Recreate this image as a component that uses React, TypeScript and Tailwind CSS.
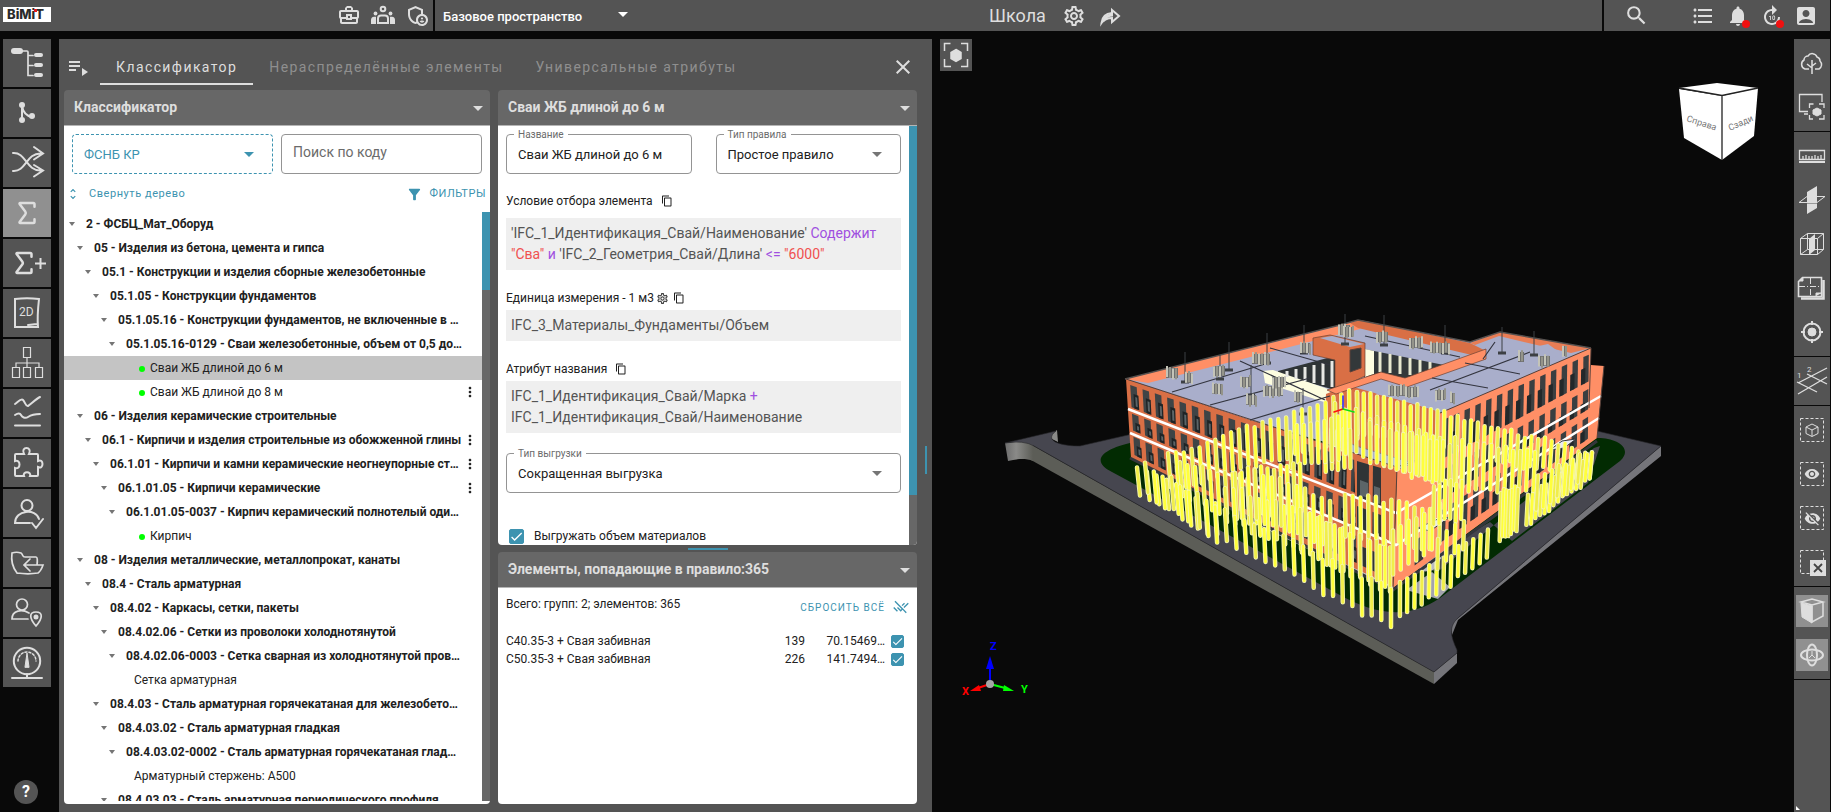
import { useState } from "react"
import type { ReactNode } from "react"
import { Sigma } from "lucide-react"
import {
  MdAccountBox,
  MdArrowDropDown,
  MdCheck,
  MdClose,
  MdContentCopy,
  MdFilterAlt,
  MdFormatListBulleted,
  MdForward10,
  MdMoreVert,
  MdNotifications,
  MdOutlineAdminPanelSettings,
  MdOutlineBusinessCenter,
  MdOutlineSettings,
  MdPlaylistPlay,
  MdRemoveDone,
  MdSearch,
  MdUnfoldMore,
  MdVisibility,
  MdVisibilityOff,
} from "react-icons/md"

type TreeNode = {
  level: number
  text: string
  leaf?: boolean
  dot?: boolean
  menu?: boolean
}

const TREE: TreeNode[] = [
  { level: 0, text: "2 - ФСБЦ_Мат_Оборуд" },
  { level: 1, text: "05 - Изделия из бетона, цемента и гипса" },
  { level: 2, text: "05.1 - Конструкции и изделия сборные железобетонные" },
  { level: 3, text: "05.1.05 - Конструкции фундаментов" },
  { level: 4, text: "05.1.05.16 - Конструкции фундаментов, не включенные в …" },
  { level: 5, text: "05.1.05.16-0129 - Сваи железобетонные, объем от 0,5 до…" },
  { level: 6, text: "Сваи ЖБ длиной до 6 м", leaf: true, dot: true },
  { level: 6, text: "Сваи ЖБ длиной до 8 м", leaf: true, dot: true, menu: true },
  { level: 1, text: "06 - Изделия керамические строительные" },
  { level: 2, text: "06.1 - Кирпичи и изделия строительные из обожженной глины", menu: true },
  { level: 3, text: "06.1.01 - Кирпичи и камни керамические неогнеупорные ст…", menu: true },
  { level: 4, text: "06.1.01.05 - Кирпичи керамические", menu: true },
  { level: 5, text: "06.1.01.05-0037 - Кирпич керамический полнотелый оди…" },
  { level: 6, text: "Кирпич", leaf: true, dot: true },
  { level: 1, text: "08 - Изделия металлические, металлопрокат, канаты" },
  { level: 2, text: "08.4 - Сталь арматурная" },
  { level: 3, text: "08.4.02 - Каркасы, сетки, пакеты" },
  { level: 4, text: "08.4.02.06 - Сетки из проволоки холоднотянутой" },
  { level: 5, text: "08.4.02.06-0003 - Сетка сварная из холоднотянутой пров…" },
  { level: 6, text: "Сетка арматурная", leaf: true },
  { level: 3, text: "08.4.03 - Сталь арматурная горячекатаная для железобето…" },
  { level: 4, text: "08.4.03.02 - Сталь арматурная гладкая" },
  { level: 5, text: "08.4.03.02-0002 - Сталь арматурная горячекатаная глад…" },
  { level: 6, text: "Арматурный стержень: А500", leaf: true },
  { level: 4, text: "08.4.03.03 - Сталь арматурная периодического профиля" },
]

const ELEMENTS = [
  { name: "С40.35-3 + Свая забивная", count: "139", volume: "70.15469…" },
  { name: "С50.35-3 + Свая забивная", count: "226", volume: "141.7494…" },
]

export default function App() {
  return (
    <div className="flex h-screen flex-col overflow-hidden bg-[#090909] pr-px font-[Roboto,'Noto_Sans',sans-serif] text-[#212121]">
      <TopBar />
      <div className="flex min-h-0 flex-1 pt-2">
        <LeftRail />
        <ClassifierPanel />
        <Viewport />
        <RightRail />
      </div>
    </div>
  )
}

function TopBar() {
  return (
    <header className="flex h-[31px] shrink-0 gap-0.5 text-[#dedede]">
      <div className="flex w-[433px] items-center justify-between bg-[#545454] pr-1 pl-[3px]">
        <a href="#" aria-label="BiMiT" className="mt-[-2px] flex h-[15px] w-12 items-center justify-center bg-white">
          <Logo />
        </a>
        <div className="flex gap-2.5 pb-0.5">
          <button type="button" aria-label="Проекты"><MdOutlineBusinessCenter size={24} /></button>
          <button type="button" aria-label="Группы"><GroupsIcon /></button>
          <button type="button" aria-label="Права"><MdOutlineAdminPanelSettings size={24} /></button>
        </div>
      </div>
      <div className="flex min-w-0 flex-1 items-center bg-[#545454]">
        <div className="relative w-52 shrink-0 pl-2">
          <select
            aria-label="Пространство"
            className="w-full appearance-none bg-transparent text-[13px] font-medium text-white outline-none"
          >
            <option>Базовое пространство</option>
          </select>
          <MdArrowDropDown size={24} className="pointer-events-none absolute top-[-2px] right-2 text-white" />
        </div>
        <div className="flex flex-1 items-center justify-center pr-[134px]">
          <h1 className="mr-4 text-[18px]">Школа</h1>
          <button type="button" aria-label="Настройки" className="mr-3"><MdOutlineSettings size={24} /></button>
          <button type="button" aria-label="Поделиться"><ShareIcon /></button>
        </div>
      </div>
      <div className="flex w-[226px] items-center justify-between bg-[#545454] pr-3 pl-5">
        <button type="button" aria-label="Поиск" className="mr-8"><MdSearch size={25} /></button>
        <button type="button" aria-label="Список"><MdFormatListBulleted size={24} /></button>
        <button type="button" aria-label="Уведомления" className="relative">
          <MdNotifications size={24} />
          <span className="absolute right-0 bottom-0 size-2 rounded-full bg-[#f01010]" />
        </button>
        <button type="button" aria-label="История" className="relative">
          <MdForward10 size={24} />
          <span className="absolute right-0 bottom-0 size-2 rounded-full bg-[#f01010]" />
        </button>
        <button type="button" aria-label="Профиль"><MdAccountBox size={24} /></button>
      </div>
    </header>
  )
}

function Logo() {
  return (
    <svg width="48" height="15" viewBox="0 0 48 15">
      <text x="4" y="12" fontFamily="Inter, sans-serif" fontWeight="800" fontSize="13" fill="#2b2b2b">BiMiT</text>
      <rect x="31" y="2" width="3" height="3" fill="#e01b1b" />
    </svg>
  )
}

function GroupsIcon() {
  return (
    <svg width="24" height="24" viewBox="0 0 24 24" fill="none" stroke="currentColor" strokeWidth="2">
      <circle cx="12" cy="6" r="2.3" />
      <path d="M7 20v-4.5a3 3 0 0 1 3-3h4a3 3 0 0 1 3 3V20z" />
      <g fill="currentColor" stroke="none">
        <circle cx="4.5" cy="10.5" r="1.9" />
        <circle cx="19.5" cy="10.5" r="1.9" />
        <path d="M0 21v-4c0-2 1-3.300 3-3.300h2V21zM24 21v-4c0-2-1-3.300-3-3.300h-2V21z" />
      </g>
    </svg>
  )
}

function ShareIcon() {
  return (
    <svg width="24" height="24" viewBox="0 0 24 24" fill="none" stroke="currentColor" strokeWidth="2">
      <path d="M14 6l7 6-7 6v-4c-5 0-8 1.500-10.500 5 .5-5 3.500-9.500 10.500-10z" />
      <path d="M5 17c2-4 5-6 10-6" strokeWidth="3" />
    </svg>
  )
}

/* ---------- left rail ---------- */

const RAIL_ICONS: { label: string; icon: ReactNode }[] = [
  {
    label: "Структура",
    icon: (
      <>
        <rect x="8" y="9" width="12" height="6" rx="3" fill="currentColor" stroke="none" />
        <path d="M19 12h5a1 1 0 0 1 1 1v23.500h5M25 16.500h5M25 26.500h5" strokeWidth="1.700" />
        <g fill="currentColor" stroke="none">
          <rect x="31" y="14" width="9" height="4" rx="2" />
          <rect x="31" y="24" width="9" height="4" rx="2" />
          <rect x="31" y="34" width="9" height="4" rx="2" />
        </g>
      </>
    ),
  },
  {
    label: "Ветви",
    icon: (
      <>
        <path d="M19 15v17M19 17c1 6 5 10 10 11" />
        <g fill="currentColor" stroke="none">
          <circle cx="19" cy="16" r="3" />
          <circle cx="19" cy="31" r="3" />
          <circle cx="29" cy="27" r="3" />
        </g>
      </>
    ),
  },
  {
    label: "Сопоставление",
    icon: (
      <path d="M10 14c13-1 13 18 28 17.500M10 32c13 1 13-18 28-17.500M31 8l9 6.500-9 6M31 26l9 5.500-9 6" />
    ),
  },
  { label: "Классификатор", icon: null },
  { label: "Добавить сумму", icon: null },
  {
    label: "2D",
    icon: (
      <>
        <path d="M12 10c8-1 16-1 24 0-1 9-2 18-1 28H12zM25 36c3 0 8-1 9-1" />
        <text x="16" y="27" fontSize="12" fill="currentColor" stroke="none">2D</text>
      </>
    ),
  },
  {
    label: "Иерархия",
    icon: (
      <path
        d="M20.500 8.500h7v10h-7zM9.500 28.500h7v10h-7zM20.500 28.500h7v10h-7zM32.500 28.500h7v10h-7zM24 19v9M13 28v-4h23v4"
        strokeWidth="1.200"
      />
    ),
  },
  {
    label: "Графики",
    icon: <path d="M12 15c3-2 6-6 8-4s3 7 5 6 8-7 12-9M12 26c3-2 5-2 6 0s4 4 7 2 8-3 12-3M12 36.500h25" />,
  },
  {
    label: "Плагины",
    icon: (
      <path d="M13 15h8c-4-8 9-8 5 0h8q1 0 1 1v6c6-3 6 9 0 6v8q0 1-1 1h-7c2-5-8-5-6 0h-8q-1 0-1-1v-7c6 2 6-9 0-7v-6q0-1 1-1z" />
    ),
  },
  {
    label: "Согласование",
    icon: <path d="M24 11a5.500 5.500 0 1 1 0 11 5.500 5.500 0 0 1 0-11zM27 34H12c0-13 21-15 24-4M29 34l4 5 7-9" />,
  },
  {
    label: "Файлы",
    icon: (
      <path
        d="M14 34C10 29 8 21 9 14c3-1 6-1 9 0 2 1 1 4 4 4h11q2 0 1 8M14 34c7 1 15 1 21 0 3-2 4-5 5-8H21M27 20l-6 6 6 6"
        strokeWidth="1.700"
      />
    ),
  },
  {
    label: "Местоположение",
    icon: (
      <>
        <path d="M19 10a5.500 5.500 0 1 1 0 11 5.500 5.500 0 0 1 0-11zM25 30H9c0-9 10-10 17-6M33 23c-7 0-7 6 0 14 7-8 7-14 0-14z" strokeWidth="1.700" />
        <circle cx="33" cy="28" r="1.500" fill="currentColor" />
      </>
    ),
  },
  {
    label: "Показатели",
    icon: (
      <>
        <circle cx="24" cy="22" r="13.200" />
        <path d="M9 39h30M24 35v4" />
        <path d="M15 22a9 9 0 0 1 18 0" strokeWidth="1.500" strokeDasharray="2 2" />
        <path d="M22 28l2-14 2 14z" fill="currentColor" strokeWidth="1" />
      </>
    ),
  },
]

function LeftRail() {
  return (
    <nav className="flex w-[59px] shrink-0 flex-col justify-between pl-[3px] text-[#dedede]">
      <div className="flex flex-col gap-0.5">
        {RAIL_ICONS.map((item, i) => (
          <button
            key={item.label}
            type="button"
            aria-label={item.label}
            className={`flex size-12 items-center justify-center ${i === 3 ? "bg-[#909090]" : "bg-[#545454]"}`}
          >
            {i === 3 && <Sigma size={30} strokeWidth={2} />}
            {i === 4 && (
              <>
                <Sigma size={30} strokeWidth={2} />
                <svg width="11" height="11" viewBox="0 0 11 11" stroke="currentColor" strokeWidth="2" className="-ml-1">
                  <path d="M5.500 0v11M0 5.500h11" />
                </svg>
              </>
            )}
            {item.icon && (
              <svg width="48" height="48" viewBox="0 0 48 48" fill="none" stroke="currentColor" strokeWidth="2" strokeLinecap="round">
                {item.icon}
              </svg>
            )}
          </button>
        ))}
      </div>
      <button type="button" className="mb-2 ml-[11px] size-6 rounded-full bg-[#545454] text-[16px] leading-6 font-bold text-white">
        ?
      </button>
    </nav>
  )
}

/* ---------- classifier ---------- */

function ClassifierPanel() {
  const [tab, setTab] = useState(0)
  const tabs = ["Классификатор", "Нераспределённые элементы", "Универсальные атрибуты"]

  return (
    <main className="relative flex w-[873px] shrink-0 flex-col bg-[#545454] pr-[15px] pb-2 pl-[5px]">
      <div className="flex h-[51px] shrink-0 items-center text-[#dedede]">
        <button type="button" aria-label="Меню" className="mt-1 ml-0.5 w-[34px]"><MdPlaylistPlay size={24} /></button>
        <div role="tablist" className="flex flex-1 self-stretch pt-3 pb-[5px]">
          {tabs.map((title, i) => (
            <button
              key={title}
              type="button"
              role="tab"
              aria-selected={tab === i}
              onClick={() => setTab(i)}
              className={`border-b-2 px-4 text-[14px] tracking-widest ${
                tab === i ? "border-[#dedede] text-[#dedede]" : "border-transparent text-[#8f8f8f]"
              }`}
            >
              {title}
            </button>
          ))}
        </div>
        <button type="button" aria-label="Закрыть" className="mt-1 mr-0.5"><MdClose size={24} /></button>
      </div>
      <div className="flex min-h-0 flex-1 gap-2">
        <Card title="Классификатор" className="min-w-0 flex-1">
          <Classifier />
        </Card>
        <div className="flex w-[419px] shrink-0 flex-col">
          <Card title="Сваи ЖБ длиной до 6 м" className="min-h-0 flex-1">
            <RuleForm />
          </Card>
          <div className="flex h-[7px] shrink-0 items-center justify-center">
            <span className="h-0.5 w-10 bg-[#3d93b0]" />
          </div>
          <Card title="Элементы, попадающие в правило:365" className="h-[252px] shrink-0">
            <ElementList />
          </Card>
        </div>
      </div>
      <span className="absolute top-[407px] right-[5px] h-7 w-0.5 bg-[#3d93b0]" />
    </main>
  )
}

function Card({ title, className, children }: { title: string; className: string; children: ReactNode }) {
  return (
    <section className={`flex flex-col overflow-hidden rounded ${className}`}>
      <div className="flex h-9 shrink-0 items-center justify-between border-b border-[#b5b5b5] bg-[#676767] pl-2.5 text-[#dedede]">
        <h2 className="text-[14px] font-bold">{title}</h2>
        <button type="button" aria-label="Свернуть"><MdArrowDropDown size={24} /></button>
      </div>
      <div className="flex min-h-0 flex-1 flex-col bg-white">{children}</div>
    </section>
  )
}

function Classifier() {
  const [selected, setSelected] = useState(6)

  return (
    <>
      <div className="grid grid-cols-2 gap-2 p-2">
        <div className="relative">
          <select
            aria-label="Классификатор"
            className="h-10 w-full appearance-none rounded border border-dashed border-[#3d93b0] bg-white px-[11px] pt-0.5 text-[13px] text-[#3d93b0] outline-none"
          >
            <option>ФСНБ КР</option>
          </select>
          <MdArrowDropDown size={24} className="pointer-events-none absolute top-2 right-3 text-[#3d93b0]" />
        </div>
        <input
          type="text"
          aria-label="Поиск по коду"
          placeholder="Поиск по коду"
          className="h-10 w-full rounded border border-[#949494] px-[11px] pb-1 text-[14px] outline-none placeholder:text-[#6b6b6b]"
        />
      </div>
      <div className="flex h-[30px] shrink-0 items-center justify-between pr-1 pb-1.5 pl-0.5 text-[11px] tracking-wider text-[#3d93b0]">
        <button type="button" className="flex items-center gap-[9px]">
          <MdUnfoldMore size={14} />
          Свернуть дерево
        </button>
        <button type="button" className="flex items-center gap-1.5">
          <MdFilterAlt size={17} />
          ФИЛЬТРЫ
        </button>
      </div>
      <div className="mb-[3px] flex min-h-0 flex-1">
        <ul className="min-w-0 flex-1 overflow-hidden">
          {TREE.map((node, i) => (
            <li
              key={i}
              onClick={() => setSelected(i)}
              style={{ paddingLeft: 5 + node.level * 8 }}
              className={`flex h-6 items-center pr-1 text-[12px] whitespace-nowrap ${selected === i ? "bg-[#c4c4c4]" : ""}`}
            >
              {!node.leaf && (
                <button type="button" aria-label="Развернуть" className="mr-[11px] text-[#757575]">
                  <svg width="6" height="4" viewBox="0 0 6 4"><path d="M0 0h6L3 4z" fill="currentColor" /></svg>
                </button>
              )}
              {node.dot && <span className="mt-0.5 mr-[5px] ml-[22px] size-1.5 shrink-0 rounded-full bg-[#00ff00]" />}
              <span className={`flex-1 ${node.leaf ? "" : "font-bold"} ${node.leaf && !node.dot ? "ml-[17px]" : ""}`}>
                {node.text}
              </span>
              {node.menu && (
                <button type="button" aria-label="Действия"><MdMoreVert size={16} /></button>
              )}
            </li>
          ))}
        </ul>
        <div className="w-2 bg-[#676767]">
          <div className="h-[78px] bg-[#3d93b0]" />
        </div>
      </div>
    </>
  )
}

function Caption({ children, gear }: { children: ReactNode; gear?: boolean }) {
  return (
    <div className="flex h-5 items-center text-[12px]">
      <span>{children}</span>
      {gear && <MdOutlineSettings size={13} className="ml-0.5 text-[#424242]" />}
      <button type="button" aria-label="Копировать" className={gear ? "ml-1" : "ml-2"}>
        <MdContentCopy size={12} />
      </button>
    </div>
  )
}

function SelectField({ id, label, value }: { id: string; label: string; value: string }) {
  return (
    <div className="relative min-w-0 flex-1">
      <label htmlFor={id} className="absolute top-[-7px] left-2 bg-white px-1 text-[10px] leading-4 text-[#6b6b6b]">
        {label}
      </label>
      <select
        id={id}
        className="h-10 w-full appearance-none rounded border border-[#949494] bg-white px-[11px] pt-0.5 text-[13px] outline-none"
      >
        <option>{value}</option>
      </select>
      <MdArrowDropDown size={24} className="pointer-events-none absolute top-2 right-3 text-[#757575]" />
    </div>
  )
}

function RuleForm() {
  return (
    <div className="flex min-h-0 flex-1">
      <div className="min-w-0 flex-1 overflow-hidden pt-2 pr-2 pl-2">
        <div className="flex gap-6">
          <div className="relative min-w-0 flex-1">
            <label htmlFor="name" className="absolute top-[-7px] left-2 bg-white px-1 text-[10px] leading-4 text-[#6b6b6b]">
              Название
            </label>
            <input
              id="name"
              type="text"
              defaultValue="Сваи ЖБ длиной до 6 м"
              className="h-10 w-full rounded border border-[#949494] px-[11px] text-[13px] outline-none"
            />
          </div>
          <SelectField id="rule" label="Тип правила" value="Простое правило" />
        </div>
        <div className="mt-[17px]"><Caption>Условие отбора элемента</Caption></div>
        <p className="mt-[7px] bg-[#efefef] p-[5px] text-[14px] leading-[21px] text-[#545454]">
          'IFC_1_Идентификация_Свай/Наименование' <span className="text-[#a04fe0]">Содержит</span>{" "}
          <span className="text-[#f05050]">"Сва"</span> <span className="text-[#a04fe0]">и</span>{" "}
          'IFC_2_Геометрия_Свай/Длина' <span className="text-[#a04fe0]">&lt;=</span>{" "}
          <span className="text-[#f05050]">"6000"</span>
        </p>
        <div className="mt-[18px]"><Caption gear>Единица измерения - 1 м3</Caption></div>
        <p className="mt-0.5 bg-[#efefef] p-[5px] text-[14px] leading-[21px] text-[#545454]">
          IFC_3_Материалы_Фундаменты/Объем
        </p>
        <div className="mt-[18px]"><Caption>Атрибут названия</Caption></div>
        <p className="mt-0.5 bg-[#efefef] p-[5px] text-[14px] leading-[21px] text-[#545454]">
          IFC_1_Идентификация_Свай/Марка <span className="text-[#a04fe0]">+</span>
          <br />
          IFC_1_Идентификация_Свай/Наименование
        </p>
        <div className="mt-5 flex"><SelectField id="export" label="Тип выгрузки" value="Сокращенная выгрузка" /></div>
        <div className="mt-[34px] flex items-center pl-[3px] text-[12px]">
          <Checkbox id="volume" large />
          <label htmlFor="volume" className="pl-2.5">Выгружать объем материалов</label>
        </div>
      </div>
      <div className="w-2 bg-[#676767]">
        <div className="h-[88%] bg-[#3d93b0]" />
      </div>
    </div>
  )
}

function Checkbox({ id, large }: { id: string; large?: boolean }) {
  const box = large ? "size-[15px]" : "size-[13px]"
  return (
    <span className={`relative inline-block shrink-0 ${box}`}>
      <input
        id={id}
        type="checkbox"
        defaultChecked
        className={`peer block appearance-none rounded-[2px] border border-[#3d93b0] checked:bg-[#3d93b0] ${box}`}
      />
      <MdCheck className="pointer-events-none absolute inset-0 hidden size-full text-white peer-checked:block" />
    </span>
  )
}

function ElementList() {
  return (
    <div className="px-2 pt-1.5">
      <div className="flex h-5 items-center justify-between text-[12px]">
        <span>Всего: групп: 2; элементов: 365</span>
        <button type="button" className="mt-1.5 flex items-center gap-2 text-[10px] tracking-widest text-[#3d93b0]">
          СБРОСИТЬ ВСЁ
          <MdRemoveDone size={16} />
        </button>
      </div>
      <table className="mt-[18px] w-full table-fixed text-[12px] leading-[18px]">
        <tbody>
          {ELEMENTS.map((row, i) => (
            <tr key={row.name}>
              <td className="p-0"><label htmlFor={`el${i}`}>{row.name}</label></td>
              <td className="w-10 p-0 text-right">{row.count}</td>
              <td className="w-20 p-0 text-right">{row.volume}</td>
              <td className="w-6 p-0 pl-1.5"><span className="flex"><Checkbox id={`el${i}`} /></span></td>
            </tr>
          ))}
        </tbody>
      </table>
    </div>
  )
}

/* ---------- 3D view ---------- */

function FocusIcon() {
  return (
    <svg width="32" height="32" viewBox="0 0 32 32" fill="none" stroke="#dedede" strokeWidth="1.500">
      <path d="M4.500 12V4.500h6M21 4.500h6.500V12M27.500 20v7.500H21M11 27.500H4.500V20" />
      <path d="M16 10.500l5 3v6l-5 3-5-3v-6z" fill="#dedede" />
    </svg>
  )
}

function Viewport() {
  return (
    <div className="relative -mt-2 min-w-0 flex-1">
      <svg viewBox="932 31 862 781" className="size-full" fontFamily="Roboto, sans-serif">
        <Site />
        <Building />
        <Piles />
        <Axes />
        <ViewCube />
      </svg>
      <button type="button" aria-label="Показать всё" className="absolute top-2 left-2 size-8 bg-[#545454]">
        <FocusIcon />
      </button>
    </div>
  )
}

type Pt = [number, number]
type Quad = [Pt, Pt, Pt, Pt]

// point inside a quad given as TL, TR, BR, BL
function at(q: Quad, u: number, v: number): Pt {
  const mix = (a: Pt, b: Pt, t: number): Pt => [a[0] + (b[0] - a[0]) * t, a[1] + (b[1] - a[1]) * t]
  return mix(mix(q[0], q[1], u), mix(q[3], q[2], u), v)
}

function cell(q: Quad, u0: number, u1: number, v0: number, v1: number) {
  return [at(q, u0, v0), at(q, u1, v0), at(q, u1, v1), at(q, u0, v1)]
    .map((p) => p.map((n) => n.toFixed(1)).join(","))
    .join(" ")
}

function noise(n: number) {
  const s = Math.sin(n * 127.1) * 43758.5453
  return s - Math.floor(s)
}

function Site() {
  return (
    <g>
      <defs>
        <linearGradient id="tip" x1="0" x2="1">
          <stop offset="0" stopColor="#6c6c6c" />
          <stop offset="0.4" stopColor="#8a8a88" />
          <stop offset="1" stopColor="#5c5d57" />
        </linearGradient>
      </defs>
      <path d="M1030 444L1434 672V684L1031 460z" fill="#5c5d57" />
      <path d="M1005 443l20-2 8 3v17c-8-3-16-2-25 0z" fill="url(#tip)" />
      <path d="M1048 437l9-7 1 12z" fill="#8a8a88" />
      <path d="M1434 672l23-19v10l-23 21z" fill="#75757a" />
      <path d="M1661 446v10L1458 620l-6 15c-2-8 0-13 6-17z" fill="#75757a" />
      <path
        d="M1005 443L1056 431C1044 440 1058 446 1080 446L1128 435 1350 380 1597 431 1661 446 1458 618C1448 627 1451 637 1457 650V653L1434 672 1034 446q-10-6-29-3z"
        fill="#46464f"
        stroke="#26262a"
        strokeWidth=".6"
      />
      <path
        d="M1134 442C1098 450 1092 462 1112 472L1338 594C1370 612 1405 622 1440 598L1620 461C1634 448 1616 438 1598 438L1350 430z"
        fill="#022b02"
      />
      <path d="M1440 570L1500 520 1594 448 1600 446 1588 483 1512 541 1490 522 1430 556z" fill="#46464f" />
      <path d="M1406 590l26-18 18 15-12 12z" fill="#a3a3ad" />
      <path d="M1418 566l22-20 8 2-14 22-12 2z" fill="#b9bac2" stroke="#55575e" strokeDasharray="2 1" />
    </g>
  )
}

function Building() {
  const left: Quad = [[1126, 379], [1397, 467], [1393, 588], [1131, 458]]
  const front: Quad = [[1397, 470], [1436, 455], [1436, 554], [1393, 588]]
  const right: Quad = [[1440, 413], [1591, 348], [1590, 443], [1436, 554]]
  const floors = [[0.06, 0.34], [0.42, 0.63], [0.71, 0.94]]

  return (
    <g>
      {/* roofs */}
      <path d="M1125 379L1340 325 1358 320 1470 342 1500 332 1591 348V365L1440 420 1420 470 1250 420z" fill="#a9aecb" />
      <path d="M1125 379L1338 326 1360 320v9L1148 383z" fill="#ff8f66" />
      <path d="M1350 323l10-3 110 23 16 8-10 5-118-28z" fill="#d96f45" />
      <path d="M1470 343l30-11 91 16-20 5-72-17-24 9z" fill="#e87d55" />
      <path d="M1125 379L1340 325 1358 320 1470 342 1500 332 1591 348" fill="none" stroke="#55504e" strokeWidth="1.500" />

      {/* inner court */}
      <path d="M1278 371l57-15v34l-57-16z" fill="#2f3436" />
      <path d="M1263 371l10-1 58 20-4 13-62-20z" fill="#fdfde0" />
      {[0, 1, 2, 3, 4, 5].map((i) => (
        <path key={i} d={`M${1287 + i * 9} ${371 - i * 2}v${6 + i * 4}`} stroke="#e8e8e4" strokeWidth="3" />
      ))}
      <path d="M1364 349l80 16-4 16-40 0-20-6-16 2z" fill="#33383a" />
      <path d="M1365 349l9 2v23l-9 3z" fill="#fdfde0" />
      {[0, 1, 2, 3, 4, 5].map((i) => (
        <path key={i} d={`M${1380 + i * 10} ${352 + i * 2}v${20 - i}`} stroke="#e8e8d0" strokeWidth="3" />
      ))}
      <path d="M1313 338l17-3 35 8v33l-30 14v-30l-22-5z" fill="#d96f45" stroke="#6b4030" strokeWidth=".7" />
      <path d="M1320 338l12-2 32 8-14 3z" fill="#a9aecb" />
      <path d="M1350 350l11-2v20l-11 4z" fill="#33383a" stroke="#5e4038" />

      {/* right wing wall above the low block */}
      <path d="M1326 394l24-10 90 28-1 50-40 6-75-22z" fill="#d96f45" />
      <path d="M1338 391l45-15 20 4-4 12 46-14-7 33-88-25z" fill="#a9aecb" />
      <path d="M1438 408l82-36 42-18-14-10-65 14-82 28-26 8z" fill="#a9aecb" />
      <path d="M1327 390l54-18 24 6 81-29v10l-79 28-26-8-45 15z" fill="#ff8f66" stroke="#6b4030" strokeWidth=".7" />
      <path d="M1340 438l16 8 57 17-16 7-60-17z" fill="#a9aecb" stroke="#6b6f80" strokeWidth=".8" />

      {/* facades */}
      <path d="M1126 379L1250 420 1335 447 1397 467 1393 588 1131 458z" fill="#d96f45" />
      <path d="M1397 470l39-15 4-42 151-65v17l13 1-7 72-204 150z" fill="#ff8f66" />

      {Array.from({ length: 22 }, (_, i) =>
        floors.map(([a, b], j) => (
          <g key={`${i}-${j}`}>
            <polygon points={cell(left, (i + 0.32) / 22, (i + 0.85) / 22, a, b)} fill="#3f4446" />
            <polygon points={cell(left, (i + 0.55) / 22, (i + 0.95) / 22, a + 0.1, b)} fill="#1f2426" />
            <polygon points={cell(left, (i + 0.68) / 22, (i + 0.84) / 22, a + 0.13, b - 0.03)} fill="#5c6568" />
          </g>
        )),
      )}
      {Array.from({ length: 14 }, (_, i) =>
        floors.map(([a, b], j) => (
          <g key={`${i}-${j}`}>
            <polygon points={cell(right, (i + 0.3) / 14, (i + 0.8) / 14, a, b)} fill="#3a3f41" />
            <polygon points={cell(right, (i + 0.1) / 14, (i + 0.5) / 14, a + 0.12, b)} fill="#23282a" />
          </g>
        )),
      )}
      <polygon points={cell(front, 0.5, 0.7, 0.72, 0.95)} fill="#33383a" />
      {/* solid corner of the entrance block */}
      <path d="M1354 453l43 15-4 118-36-17z" fill="#d96f45" />
      <path d="M1357 461l24 7v38l-24-8zM1357 506l24 9v22l-24-9zM1358 545l22 9v20l-22-10z" fill="#2f3436" />
      <path d="M1360 480l8 3v15l-8-3zM1374 486l6 2v16l-6-2z" fill="#5c6568" />
      <path d="M1371 462l-1 110" stroke="#d96f45" strokeWidth="4" />

      {/* floor bands */}
      <g fill="none" stroke="#fff" strokeWidth="2.500">
        <path d="M1128 409L1396 513 1601 396" />
        <path d="M1130 433L1396 545 1599 418" />
        <path d="M1250 520L1393 588" stroke="#c9c9d0" />
      </g>
      <path d="M1130 458L1393 590 1597 441" fill="none" stroke="#33363c" strokeWidth="3" />
      <path d="M1126 379L1397 467 1440 452M1440 413L1591 348M1604 366L1597 438M1397 467L1393 588M1591 348l-2 60" fill="none" stroke="#55403a" />
      <path d="M1418 528l20-9 12-2-20 14zM1550 450l12-9 14-2-12 9z" fill="#e9e9f2" stroke="#34383e" />

      {/* roof seams */}
      <path
        d="M1172 392L1265 364M1210 405L1310 378M1250 420L1330 396M1240 361L1325 400M1270 348L1330 365M1430 390L1530 352M1432 378L1488 388M1465 363L1520 374M1483 359L1495 342M1365 336L1460 357"
        fill="none"
        stroke="#33353f"
        strokeWidth="1.200"
      />
      <RoofEquipment />
    </g>
  )
}

const UNITS: [number, number, number][] = [
  [1166, 368, 12], [1185, 373, 8], [1213, 366, 12], [1212, 384, 10], [1252, 354, 16], [1258, 354, 12],
  [1246, 395, 10], [1263, 386, 20], [1294, 392, 8], [1300, 343, 10], [1338, 325, 12], [1376, 332, 12],
  [1343, 327, 10], [1409, 338, 14], [1430, 343, 20], [1240, 377, 10], [1272, 377, 14], [1388, 386, 18],
  [1405, 387, 14], [1435, 390, 10], [1450, 393, 5], [1538, 356, 12], [1518, 352, 6], [1562, 346, 4],
]

const MASTS: [number, number, number][] = [
  [1185, 352, 30], [1229, 342, 28], [1267, 333, 30], [1304, 325, 28], [1345, 314, 30], [1384, 315, 30],
  [1445, 325, 28], [1502, 327, 26], [1534, 331, 24], [1303, 388, 26], [1220, 355, 24], [1251, 365, 30],
]

function RoofEquipment() {
  return (
    <g>
      {MASTS.map(([x, y, h]) => (
        <g key={`${x}-${y}`} stroke="#3d4044">
          <path d={`M${x} ${y}v${h}`} />
          <path d={`M${x - 4} ${y + h}h8`} strokeWidth="3" />
        </g>
      ))}
      {UNITS.map(([x, y, w], i) => (
        <g key={i}>
          <rect x={x} y={y} width={w} height={10} fill="#6f7070" />
          {Array.from({ length: Math.ceil(w / 3) }, (_, k) => (
            <path
              key={k}
              d={`M${x + k * 3 + 1} ${y - 2 + noise(i * 9 + k) * 3}v11`}
              stroke={k % 2 ? "#94948a" : "#c4c4b8"}
              strokeWidth="2"
            />
          ))}
        </g>
      ))}
    </g>
  )
}

// start point, end point, pile length at both ends, count
const PILE_ROWS: [number, number, number, number, number, number, number][] = [
  [1168, 456, 1357, 390, 34, 46, 25],
  [1357, 390, 1592, 453, 42, 26, 36],
  [1335, 405, 1440, 440, 42, 46, 16],
  [1350, 430, 1325, 432, 38, 40, 5],
  [1290, 430, 1345, 412, 36, 44, 9],
  [1370, 425, 1470, 448, 36, 40, 16],
  [1455, 440, 1535, 452, 48, 40, 12],
  [1180, 462, 1255, 480, 34, 46, 11],
  [1235, 472, 1300, 464, 46, 48, 11],
  [1225, 486, 1385, 540, 34, 46, 20],
  [1255, 470, 1330, 500, 48, 46, 10],
  [1345, 492, 1430, 510, 42, 40, 12],
  [1300, 510, 1390, 550, 40, 44, 10],
  [1393, 530, 1440, 505, 44, 40, 7],
  [1434, 485, 1462, 482, 38, 38, 6],
  [1137, 468, 1391, 590, 28, 38, 27],
  [1145, 464, 1215, 505, 30, 36, 9],
  [1400, 585, 1488, 531, 34, 28, 13],
  [1438, 540, 1464, 520, 30, 28, 4],
  [1501, 492, 1518, 488, 48, 42, 7],
  [1528, 495, 1592, 453, 30, 26, 15],
  [1538, 478, 1580, 456, 34, 28, 7],
]

function Piles() {
  return (
    <g strokeLinecap="round">
      {PILE_ROWS.map(([x1, y1, x2, y2, h1, h2, n], r) =>
        Array.from({ length: n }, (_, i) => {
          const t = i / (n - 1)
          const x = x1 + (x2 - x1) * t
          const y = y1 + (y2 - y1) * t + (noise(r * 41 + i) - 0.5) * 6
          const h = h1 + (h2 - h1) * t
          // piles lean towards the vanishing point
          const lean = (1391 - x) * 0.012
          const d = `M${x.toFixed(1)} ${y.toFixed(1)}l${lean.toFixed(1)} ${h.toFixed(1)}`
          return (
            <g key={`${r}-${i}`}>
              <path d={d} stroke="#f5f5b4" strokeWidth="4.500" />
              <path d={d} stroke={i % 3 ? "#ffff3c" : "#f0ee4a"} strokeWidth="2.800" />
            </g>
          )
        }),
      )}
      <path d="M1343 409v-13" stroke="#2020ff" strokeWidth="1.500" />
      <path d="M1343 409l-9 3" stroke="#ff1010" strokeWidth="1.500" />
      <path d="M1343 409l11 3" stroke="#10e010" strokeWidth="1.500" />
    </g>
  )
}

function Axes() {
  return (
    <g fontSize="11" fontWeight="700">
      <path d="M990 684V668" stroke="#0000ff" strokeWidth="2" />
      <path d="M990 656l4 13h-8z" fill="#0000ff" />
      <path d="M990 684l15 4" stroke="#00ff00" strokeWidth="2" />
      <path d="M1014 691l-10-6-1 6z" fill="#00ff00" />
      <path d="M990 684l-12 4" stroke="#ff0000" strokeWidth="2" />
      <path d="M970 691l9-6 2 6z" fill="#ff0000" />
      <circle cx="990" cy="684" r="4" fill="#a5a5a5" />
      <text x="990" y="650" fill="#0000ff">Z</text>
      <text x="1021" y="693" fill="#00ff00">Y</text>
      <text x="962" y="695" fill="#ff0000">X</text>
    </g>
  )
}

function ViewCube() {
  return (
    <g>
      <path d="M1679 88l38-5 41 5-36 8z" fill="#fff" />
      <path d="M1679 89l43 7v64l-38-22z" fill="#fff" />
      <path d="M1722 96l36-8-4 48-32 24z" fill="#fff" />
      <path d="M1679 88l43 7.500 36-7.500M1722 96v64" fill="none" stroke="#222" strokeWidth="1.300" />
      <text x="1686" y="121" fontSize="9" fill="#777" transform="rotate(18 1686 121)">Справа</text>
      <text x="1730" y="131" fontSize="9" fill="#777" transform="rotate(-24 1730 131)">Сзади</text>
    </g>
  )
}

/* ---------- right rail ---------- */

const dashed = <rect x="4.5" y="4.5" width="23" height="23" strokeDasharray="3 2" />

const TOOL_GROUPS: { label: string; active?: boolean; icon: ReactNode }[][] = [
  [
    {
      label: "Окружение",
      icon: (
        <path
          d="M13 22H9a5 5 0 0 1-1-9 4 4 0 0 1 4-4 5 5 0 0 1 9 1 4 4 0 0 1 3 4 5 5 0 0 1-1 8h-4M16 13v14M16 21l-5-4M16 19l4-3"
          strokeWidth="1.500"
        />
      ),
    },
    {
      label: "Экран",
      icon: (
        <>
          <path d="M26 11V3.500H3.500v17H8M8 20.500h4M12 23H8" strokeWidth="1.300" />
          <path d="M13.500 17v-4h4M23 13h5v4M28 24v4h-5M17 28h-3.500v-4" strokeWidth="1.300" />
          <path d="M21 17l4 2v4l-4 2-4-2v-4z" fill="currentColor" />
        </>
      ),
    },
  ],
  [
    {
      label: "Линейка",
      icon: (
        <>
          <path d="M3.500 10.500h25v9h-25zM7 19v-3M10 19v-4M13 19v-3M16 19v-3M19 19v-4M22 19v-3M25 19v-4" strokeWidth="1.300" />
          <path d="M3 22h26" strokeWidth="2" />
        </>
      ),
    },
    {
      label: "Сечение",
      icon: (
        <>
          <path d="M3 18.500l8-6h18l-8 6z" />
          <path d="M11 8l10-6v16H11zM11 19.500h10V24l-10 6z" fill="currentColor" stroke="none" />
        </>
      ),
    },
    {
      label: "Объём",
      icon: (
        <>
          <path d="M4.500 10.500h17v16h-17zM4.500 10.500l7-5h16v16l-6 5M21.500 10.500l6-5M11.500 5.500v16h16M4.500 26.500l7-5" />
          <path d="M13 11l6-5v16l-6 5z" fill="currentColor" stroke="none" />
        </>
      ),
    },
    {
      label: "План",
      icon: (
        <>
          <path d="M6.500 5.500h19v19h-23v-15z" strokeWidth="1.600" />
          <path d="M27.500 8v18.500H5" strokeWidth="2.500" />
          <path d="M14.500 6v18M3 14.500h23" strokeDasharray="6 2 1 2" />
          <path d="M20 24v-3h6M3 9h4V5z" fill="currentColor" />
        </>
      ),
    },
    {
      label: "Цель",
      icon: (
        <>
          <circle cx="16" cy="16" r="8.500" strokeWidth="2" />
          <circle cx="16" cy="16" r="4" fill="currentColor" />
          <path d="M16 5v4M16 23v4M5 16h4M23 16h4" strokeWidth="2" />
        </>
      ),
    },
  ],
  [
    {
      label: "Оси",
      icon: (
        <>
          <path d="M2 18L31 3M2 29L31 12M1 17l20 10M11 9l20 10" strokeWidth="1.300" />
          <text x="1" y="13" fontSize="8" fill="currentColor" stroke="none">1</text>
          <text x="11" y="7" fontSize="8" fill="currentColor" stroke="none">2</text>
        </>
      ),
    },
  ],
  [
    {
      label: "Выделить",
      icon: (
        <>
          {dashed}
          <path d="M16 10l6 3v6.500l-6 3-6-3V13zM10 13l6 3 6-3M16 16v6" />
        </>
      ),
    },
    {
      label: "Показать",
      icon: (
        <>
          {dashed}
          <MdVisibility x="8" y="8" size={16} />
        </>
      ),
    },
    {
      label: "Скрыть",
      icon: (
        <>
          {dashed}
          <MdVisibilityOff x="8" y="8" size={17} />
        </>
      ),
    },
    {
      label: "Снять выделение",
      icon: (
        <>
          {dashed}
          <path d="M14 14h16v16H14z" fill="#dedede" stroke="none" />
          <path d="M18 18l8 8M26 18l-8 8" stroke="#444" strokeWidth="1.800" />
        </>
      ),
    },
  ],
  [
    {
      label: "Куб",
      active: true,
      icon: (
        <>
          <path d="M5 7l11-3 11 3-11 3zM16 10v17l11-6V7" strokeWidth="1.500" />
          <path d="M5 8l11 3v17L6 22z" fill="currentColor" />
        </>
      ),
    },
    {
      label: "Орбита",
      active: true,
      icon: (
        <>
          <ellipse cx="16" cy="16" rx="11" ry="5.500" strokeWidth="2" />
          <ellipse cx="16" cy="16" rx="5" ry="10.500" strokeWidth="2" />
          <path d="M16 12v4l-3 3M16 16l3 3" />
        </>
      ),
    },
  ],
]

function RightRail() {
  return (
    <aside className="flex w-9 shrink-0 flex-col gap-px text-[#dedede]">
      {TOOL_GROUPS.map((group, g) => (
        <div key={g} className="flex flex-col items-center gap-3 bg-[#545454] py-2">
          {group.map((tool) => (
            <button
              key={tool.label}
              type="button"
              aria-label={tool.label}
              className={`size-8 ${tool.active ? "bg-[#909090]" : ""}`}
            >
              <svg width="32" height="32" viewBox="0 0 32 32" fill="none" stroke="currentColor">
                {tool.icon}
              </svg>
            </button>
          ))}
        </div>
      ))}
      <div className="flex flex-1 items-end bg-[#545454] pb-0.5 pl-0.5">
        <svg width="4" height="4" viewBox="0 0 4 4"><path d="M0 0l4 4H0z" fill="#fff" /></svg>
      </div>
    </aside>
  )
}
